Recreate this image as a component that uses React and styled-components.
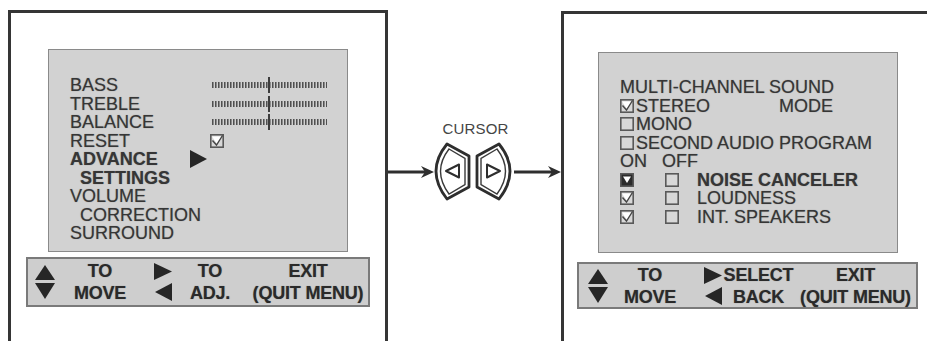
import React from "react";
import styled, { createGlobalStyle } from "styled-components";

const GlobalStyle = createGlobalStyle`
  html, body {
    margin: 0;
    padding: 0;
    background: #ffffff;
  }
  body {
    font-family: "Liberation Sans", Arial, sans-serif;
    overflow: hidden;
  }
`;

const Page = styled.div`
  display: flex;
  align-items: flex-start;
  width: 927px;
  height: 341px;
  padding: 10px 0 0 8px;
  box-sizing: border-box;
  overflow: hidden;
`;

const Frame = styled.div`
  flex: none;
  box-sizing: border-box;
  width: ${(p) => p.$width}px;
  height: 345px;
  margin-top: ${(p) => p.$offset || 0}px;
  padding-top: ${(p) => p.$top}px;
  border: 3px solid #353535;
  border-bottom: none;
  ${(p) => p.$open && "border-right: none;"}
  display: flex;
  flex-direction: column;
  align-items: flex-start;
`;

const Panel = styled.div`
  box-sizing: border-box;
  width: 300px;
  height: ${(p) => p.$height}px;
  margin-left: ${(p) => p.$left}px;
  padding: ${(p) => p.$padTop}px 0 0 21px;
  background: #d2d2d2;
  border: 1px solid #8a8a8a;
  color: #363636;
  font-size: 18px;
  line-height: 18.5px;
  text-shadow: 0 0 1px rgba(40, 40, 40, 0.45);
`;

const Row = styled.div`
  display: flex;
  align-items: center;
  height: 18.5px;
  white-space: nowrap;
`;

const Label = styled.span`
  display: inline-block;
  flex: none;
  width: ${(p) => (p.$width ? `${p.$width}px` : "auto")};
  padding-left: ${(p) => p.$indent || 0}px;
  box-sizing: border-box;
  font-weight: ${(p) => (p.$bold ? 700 : 400)};
`;

const Slider = styled.div`
  position: relative;
  width: 115px;
  height: 6px;
  background: repeating-linear-gradient(
    90deg,
    #505050 0 1px,
    #8a8a8a 1px 2px,
    transparent 2px 3px
  );
  &::after {
    content: "";
    position: absolute;
    left: 56px;
    top: -5px;
    width: 2px;
    height: 16px;
    background: #3c3c3c;
  }
`;

const OptionGrid = styled.div`
  display: grid;
  grid-template-columns: 45px 32px auto;
  align-items: center;
  height: 18.5px;
  white-space: nowrap;
`;

const Bar = styled.div`
  box-sizing: border-box;
  display: grid;
  grid-template-columns: ${(p) => p.$cols};
  align-items: center;
  width: ${(p) => p.$width}px;
  height: ${(p) => p.$height}px;
  margin: ${(p) => p.$gap}px 0 0 ${(p) => p.$left}px;
  padding-left: ${(p) => p.$pad}px;
  background: #cecece;
  border: 2px solid #7a7a7a;
  color: #2a2a2a;
  font-size: 18px;
  font-weight: 700;
  line-height: 22px;
  text-shadow: 0 0 1px rgba(30, 30, 30, 0.45);
`;

const Cell = styled.div`
  display: flex;
  flex-direction: column;
  align-items: center;
  white-space: nowrap;
  letter-spacing: -0.2px;
`;

const ArrowStack = styled.div`
  display: flex;
  flex-direction: column;
  align-items: ${(p) => p.$align || "center"};
  gap: ${(p) => p.$gap}px;
`;

const Connector = styled.div`
  flex: none;
  width: 173px;
  display: flex;
  flex-direction: column;
  align-items: center;
  padding-top: 111px;
`;

const CursorText = styled.div`
  font-size: 15px;
  line-height: 16px;
  color: #454545;
  letter-spacing: 0.2px;
  margin-left: 2px;
`;

const CursorRow = styled.div`
  display: flex;
  align-items: center;
  margin-top: 4px;
  width: 100%;
`;

const Tri = ({ dir, w = 18, h = 17 }) => {
  const pts = {
    up: `${w / 2},0 ${w},${h} 0,${h}`,
    down: `0,0 ${w},0 ${w / 2},${h}`,
    right: `0,0 ${w},${h / 2} 0,${h}`,
    left: `${w},0 0,${h / 2} ${w},${h}`,
  }[dir];
  return (
    <svg width={w} height={h} viewBox={`0 0 ${w} ${h}`}>
      <polygon points={pts} fill="#262626" />
    </svg>
  );
};

const Box = ({ kind = "empty" }) => (
  <svg width="14" height="14" viewBox="0 0 14 14" style={{ flex: "none" }}>
    <rect
      x="0.8"
      y="0.8"
      width="12.4"
      height="12.4"
      fill={kind === "filled" ? "#2b2b2b" : "#d8d8d8"}
      stroke="#595959"
      strokeWidth="1.6"
    />
    {kind === "checked" && (
      <>
        <polygon points="2,2.5 12,2.5 7,10" fill="#ffffff" />
        <polyline
          points="2.5,6.5 6.5,11 12.5,1.5"
          fill="none"
          stroke="#454545"
          strokeWidth="1.4"
        />
      </>
    )}
    {kind === "filled" && <polygon points="3,3.5 11,3.5 7,10" fill="#ffffff" />}
  </svg>
);

const Arrow = ({ width }) => (
  <svg width={width} height="14" viewBox={`0 0 ${width} 14`} style={{ flex: "none" }}>
    <line x1="0" y1="7" x2={width - 6} y2="7" stroke="#2e2e2e" strokeWidth="3" />
    <polygon
      points={`${width - 13},1 ${width},7 ${width - 13},13 ${width - 9},7`}
      fill="#2e2e2e"
    />
  </svg>
);

const CursorKeys = () => {
  const piece = "M13,3 L35,15 L35,46 L13,58 Q-9,30 13,3 Z";
  const inner = "M15,8 L31,17.5 L31,43.5 L15,53 Q-2,30 15,8 Z";
  const tri = "M12,30 L25,23.5 L25,36.5 Z";
  return (
    <svg width="80" height="61" viewBox="0 0 80 61" style={{ flex: "none" }}>
      {[0, 1].map((i) => (
        <g key={i} transform={i ? "translate(78,0) scale(-1,1)" : undefined}>
          <path d={piece} fill="#ffffff" stroke="#2e2e2e" strokeWidth="2.8" strokeLinejoin="round" />
          <path d={inner} fill="none" stroke="#3a3a3a" strokeWidth="1.4" />
          <path d={tri} fill="#ffffff" stroke="#2e2e2e" strokeWidth="2" strokeLinejoin="round" />
        </g>
      ))}
    </svg>
  );
};

const UpDown = () => (
  <ArrowStack $gap={3}>
    <Tri dir="up" w={20} h={15} />
    <Tri dir="down" w={20} h={16} />
  </ArrowStack>
);

const SideArrows = ({ align }) => (
  <ArrowStack $gap={3} $align={align}>
    <Tri dir="right" w={18} h={17} />
    <Tri dir="left" w={17} h={18} />
  </ArrowStack>
);

const TwoLines = ({ top, bottom }) => (
  <Cell>
    <span>{top}</span>
    <span>{bottom}</span>
  </Cell>
);

export default function App() {
  return (
    <>
      <GlobalStyle />
      <Page>
        <Frame $width={380} $top={36}>
          <Panel $height={203} $left={37} $padTop={26}>
            <Row>
              <Label $width={142}>BASS</Label>
              <Slider />
            </Row>
            <Row>
              <Label $width={142}>TREBLE</Label>
              <Slider />
            </Row>
            <Row>
              <Label $width={142}>BALANCE</Label>
              <Slider />
            </Row>
            <Row>
              <Label $width={140}>RESET</Label>
              <Box kind="checked" />
            </Row>
            <Row>
              <Label $width={120} $bold>ADVANCE</Label>
              <Tri dir="right" w={17} h={18} />
            </Row>
            <Row>
              <Label $indent={10} $bold>SETTINGS</Label>
            </Row>
            <Row>
              <Label>VOLUME</Label>
            </Row>
            <Row>
              <Label $indent={10}>CORRECTION</Label>
            </Row>
            <Row>
              <Label>SURROUND</Label>
            </Row>
          </Panel>
          <Bar
            $width={344}
            $height={50}
            $gap={5}
            $left={15}
            $pad={7}
            $cols="20px 90px 27px 76px 1fr"
          >
            <UpDown />
            <TwoLines top="TO" bottom="MOVE" />
            <SideArrows align="flex-end" />
            <TwoLines top="TO" bottom="ADJ." />
            <TwoLines top="EXIT" bottom="(QUIT MENU)" />
          </Bar>
        </Frame>

        <Connector>
          <CursorText>CURSOR</CursorText>
          <CursorRow>
            <Arrow width={46} />
            <CursorKeys />
            <Arrow width={47} />
          </CursorRow>
        </Connector>

        <Frame $width={380} $top={38} $offset={1} $open>
          <Panel $height={201} $left={34} $padTop={25}>
            <Row>
              <Label>MULTI-CHANNEL SOUND</Label>
            </Row>
            <Row>
              <Box kind="checked" />
              <Label $width={145} $indent={2}>STEREO</Label>
              <Label>MODE</Label>
            </Row>
            <Row>
              <Box />
              <Label $indent={2}>MONO</Label>
            </Row>
            <Row>
              <Box />
              <Label $indent={2}>SECOND AUDIO PROGRAM</Label>
            </Row>
            <Row>
              <Label $width={42}>ON</Label>
              <Label>OFF</Label>
            </Row>
            <OptionGrid>
              <Box kind="filled" />
              <Box />
              <Label $bold>NOISE CANCELER</Label>
            </OptionGrid>
            <OptionGrid>
              <Box kind="checked" />
              <Box />
              <Label>LOUDNESS</Label>
            </OptionGrid>
            <OptionGrid>
              <Box kind="checked" />
              <Box />
              <Label>INT. SPEAKERS</Label>
            </OptionGrid>
          </Panel>
          <Bar
            $width={341}
            $height={47}
            $gap={9}
            $left={13}
            $pad={9}
            $cols="20px 84px 30px 73px 1fr"
          >
            <UpDown />
            <TwoLines top="TO" bottom="MOVE" />
            <SideArrows align="flex-end" />
            <TwoLines top="SELECT" bottom="BACK" />
            <TwoLines top="EXIT" bottom="(QUIT MENU)" />
          </Bar>
        </Frame>
      </Page>
    </>
  );
}
